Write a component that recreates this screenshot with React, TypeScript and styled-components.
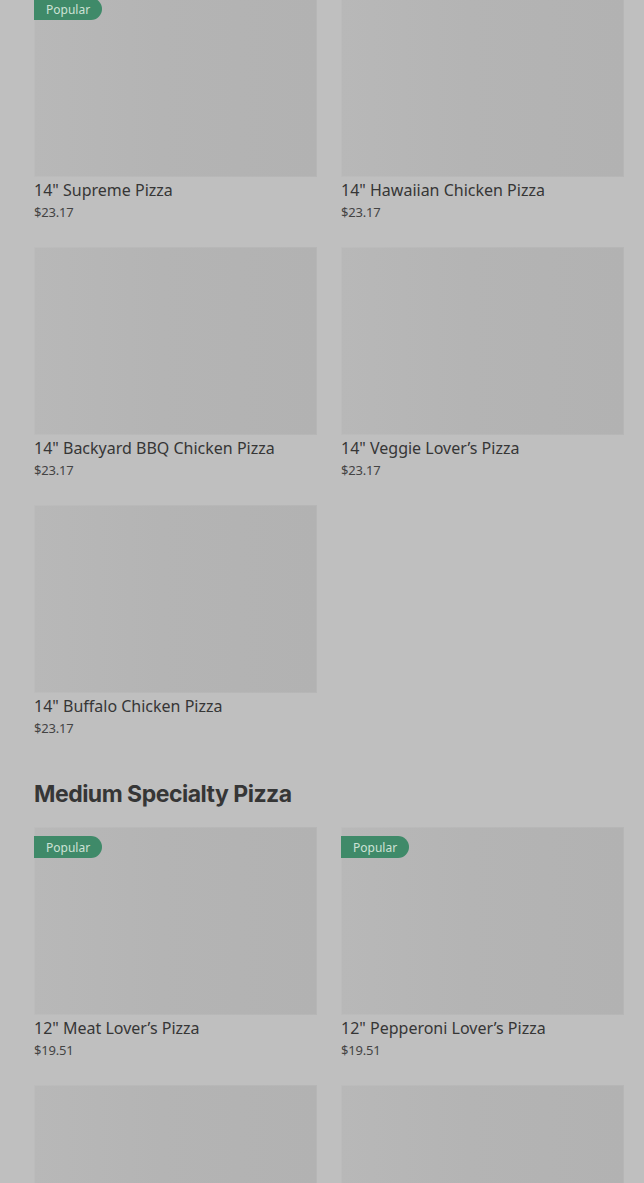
import React from "react";
import styled, { createGlobalStyle } from "styled-components";

const GlobalStyle = createGlobalStyle`
  html, body {
    margin: 0;
    padding: 0;
    background: #bfbfbf;
    overflow: hidden;
  }
  * {
    box-sizing: border-box;
  }
`;

type Item = { name: string; price: string; popular?: boolean };

const largeItems: Item[] = [
  { name: '14" Supreme Pizza', price: "$23.17", popular: true },
  { name: '14" Hawaiian Chicken Pizza', price: "$23.17" },
  { name: '14" Backyard BBQ Chicken Pizza', price: "$23.17" },
  { name: '14" Veggie Lover\u2019s Pizza', price: "$23.17" },
  { name: '14" Buffalo Chicken Pizza', price: "$23.17" },
];

const mediumItems: Item[] = [
  { name: '12" Meat Lover\u2019s Pizza', price: "$19.51", popular: true },
  { name: '12" Pepperoni Lover\u2019s Pizza', price: "$19.51", popular: true },
  { name: '12" Supreme Pizza', price: "$19.51" },
  { name: '12" Hawaiian Chicken Pizza', price: "$19.51" },
];

// page is scrolled a little: first row of cards starts above the fold
const Page = styled.main`
  margin-top: -11px;
  padding: 0 20px 0 34px;
`;

const Section = styled.section<{ $first?: boolean }>`
  margin-top: ${(p) => (p.$first ? "0" : "40px")};
`;

const SectionTitle = styled.h2`
  margin: 0 0 17px;
  font-family: Inter, "Liberation Sans", sans-serif;
  font-weight: 700;
  font-size: 23px;
  line-height: 31px;
  letter-spacing: -0.5px;
  color: #363636;
`;

const Grid = styled.div`
  display: grid;
  grid-template-columns: repeat(2, 283px);
  column-gap: 24px;
  row-gap: 24px;
`;

const Card = styled.article`
  display: flex;
  flex-direction: column;
`;

const Thumb = styled.div`
  position: relative;
  height: 188px;
  background: linear-gradient(90deg, #b8b8b8 0%, #b4b4b4 45%, #b2b2b2 100%);
  box-shadow: inset 0 0 0 1px rgba(255, 255, 255, 0.06);
`;

const Badge = styled.span`
  position: absolute;
  top: 9px;
  left: 0;
  height: 22px;
  padding: 0 12px;
  display: flex;
  align-items: center;
  background: #3f8a69;
  border-radius: 0 11px 11px 0;
  font-family: "Noto Sans", "Liberation Sans", sans-serif;
  font-size: 12px;
  color: #cde2d6;
`;

const Name = styled.h3`
  margin: 1px 0 0;
  font-family: "Noto Sans", "Liberation Sans", sans-serif;
  font-weight: 400;
  font-size: 16px;
  line-height: 24px;
  color: #363636;
`;

const Price = styled.span`
  font-family: "Noto Sans", "Liberation Sans", sans-serif;
  font-size: 13px;
  line-height: 21px;
  letter-spacing: -0.2px;
  color: #444;
`;

function MenuCard({ item }: { item: Item }) {
  return (
    <Card>
      <Thumb>{item.popular && <Badge>Popular</Badge>}</Thumb>
      <Name>{item.name}</Name>
      <Price>{item.price}</Price>
    </Card>
  );
}

export default function App() {
  return (
    <>
      <GlobalStyle />
      <Page>
        <Section $first>
          <Grid>
            {largeItems.map((it) => (
              <MenuCard key={it.name} item={it} />
            ))}
          </Grid>
        </Section>
        <Section>
          <SectionTitle>Medium Specialty Pizza</SectionTitle>
          <Grid>
            {mediumItems.map((it) => (
              <MenuCard key={it.name} item={it} />
            ))}
          </Grid>
        </Section>
      </Page>
    </>
  );
}
